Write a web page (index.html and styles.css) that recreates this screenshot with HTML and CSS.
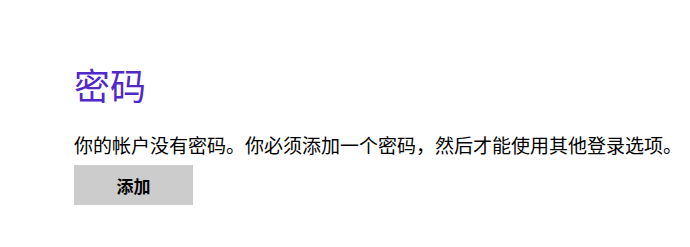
FILE: index.html
```html
<!DOCTYPE html>
<html lang="zh-CN">
<head>
    <meta charset="UTF-8">
    <meta name="viewport" content="width=device-width, initial-scale=1.0">
    <title>密码</title>
    <link rel="stylesheet" href="styles.css">
</head>
<body>
    <div class="page">
        <h1 class="title">密码</h1>
        <p class="note">你的帐户没有密码。你必须添加一个密码，然后才能使用其他登录选项。</p>
        <button class="add-btn">添加</button>
    </div>
</body>
</html>
```

FILE: styles.css
```css
* {
    margin: 0;
    padding: 0;
    box-sizing: border-box;
    font-family: "Noto Sans CJK SC", "Noto Sans", sans-serif;
}

body {
    background-color: #fff;
    width: 690px;
    height: 247px;
    overflow: hidden;
}

.page {
    padding: 66px 0 0 74px;
}

.title {
    font-size: 36px;
    line-height: 36px;
    font-weight: normal;
    color: #5129c9;
}

.note {
    margin-top: 33px;
    font-size: 19px;
    line-height: 20px;
    color: #000;
    white-space: nowrap;
}

.add-btn {
    display: block;
    margin-top: 10px;
    width: 119px;
    height: 40px;
    border: none;
    background-color: #cccccc;
    color: #000;
    font-size: 17px;
    font-weight: bold;
    cursor: pointer;
}
```
